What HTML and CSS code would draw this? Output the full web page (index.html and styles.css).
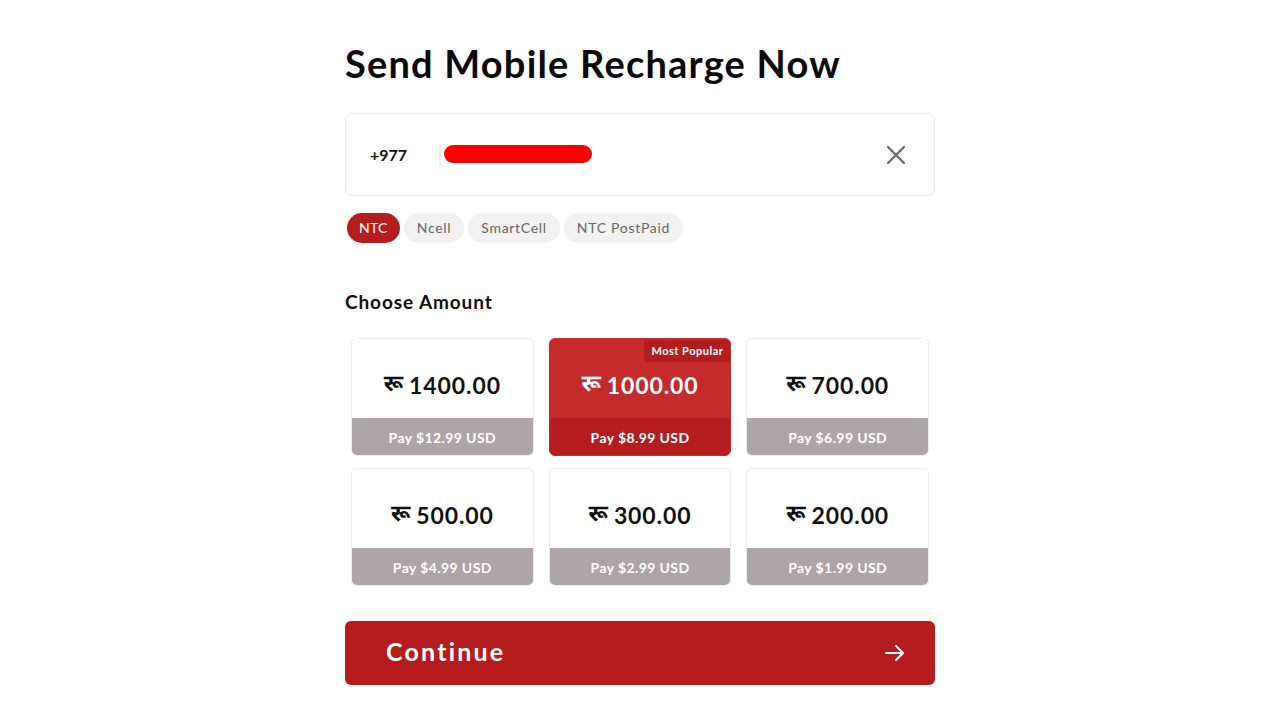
FILE: index.html
```html
<!DOCTYPE html>
<html lang="en">
<head>
<meta charset="utf-8">
<title>Send Mobile Recharge Now</title>
<link rel="stylesheet" href="styles.css">
</head>
<body>
<main class="page">
  <h1 class="title">Send Mobile Recharge Now</h1>

  <div class="phone-box">
    <span class="code">+977</span>
    <span class="divider"></span>
    <span class="redact"></span>
    <button class="clear" aria-label="Clear">
      <svg width="20" height="20" viewBox="0 0 20 20"><path d="M2 2 L18 18 M18 2 L2 18" stroke="#6b6b6b" stroke-width="2.4" stroke-linecap="round" fill="none"/></svg>
    </button>
  </div>

  <div class="chips">
    <span class="chip chip-active">NTC</span>
    <span class="chip">Ncell</span>
    <span class="chip">SmartCell</span>
    <span class="chip">NTC PostPaid</span>
  </div>

  <h2 class="section">Choose Amount</h2>

  <div class="grid">
    <div class="card">
      <div class="amount"><span class="rs">रू</span> 1400.00</div>
      <div class="pay">Pay $12.99 USD</div>
    </div>
    <div class="card card-active">
      <span class="badge">Most Popular</span>
      <div class="amount"><span class="rs">रू</span> 1000.00</div>
      <div class="pay">Pay $8.99 USD</div>
    </div>
    <div class="card">
      <div class="amount"><span class="rs">रू</span> 700.00</div>
      <div class="pay">Pay $6.99 USD</div>
    </div>
    <div class="card">
      <div class="amount"><span class="rs">रू</span> 500.00</div>
      <div class="pay">Pay $4.99 USD</div>
    </div>
    <div class="card">
      <div class="amount"><span class="rs">रू</span> 300.00</div>
      <div class="pay">Pay $2.99 USD</div>
    </div>
    <div class="card">
      <div class="amount"><span class="rs">रू</span> 200.00</div>
      <div class="pay">Pay $1.99 USD</div>
    </div>
  </div>

  <button class="continue">
    <span>Continue</span>
    <svg width="22" height="22" viewBox="0 0 22 22"><path d="M2 11 H19 M12 4 L19 11 L12 18" stroke="#fff" stroke-width="2" stroke-linecap="round" stroke-linejoin="round" fill="none"/></svg>
  </button>
</main>
</body>
</html>
```
FILE: styles.css
```css
* { box-sizing: border-box; }
html, body { margin: 0; padding: 0; background: #fff; }
body { font-family: "Lato", "Noto Sans", "DejaVu Sans", sans-serif; color: #111; }

.page {
  width: 590px;
  margin: 0 auto;
  padding-top: 40px;
  display: flex;
  flex-direction: column;
}

.title {
  margin: 0;
  font-size: 38px;
  line-height: 46px;
  font-weight: 700;
  color: #0a0a0a;
  letter-spacing: 1.2px;
}

.phone-box {
  margin-top: 27px;
  height: 83px;
  border: 1px solid #ececec;
  border-radius: 7px;
  display: flex;
  align-items: center;
  padding: 0 28px 0 24px;
}
.code { font-size: 16px; font-weight: 700; width: 69px; color: #111; }
.divider { width: 2px; height: 22px; background: #eee; margin-right: 3px; }
.redact {
  width: 148px; height: 18px; background: #ff0000; border-radius: 9px;
  margin-top: -2px;
}
.clear {
  margin-left: auto; border: 0; background: none; padding: 0;
  display: flex; align-items: center;
}

.chips { margin-top: 17px; display: flex; gap: 4px; padding-left: 2px; }
.chip {
  height: 30px; line-height: 30px; padding: 0 13px;
  border-radius: 15px; background: #f1f1f1; color: #666;
  font-size: 14px; letter-spacing: 0.7px;
}
.chip-active { background: #b51c1e; color: #fff; padding: 0 12px; letter-spacing: 0.3px; }

.section {
  margin: 47px 0 0;
  font-size: 19px; line-height: 24px; font-weight: 700; color: #111;
  letter-spacing: 0.9px;
}

.grid {
  margin-top: 24px;
  padding: 0 6px;
  display: grid;
  grid-template-columns: repeat(3, 1fr);
  column-gap: 15px;
  row-gap: 12px;
}
.card {
  position: relative;
  height: 118px;
  border: 1px solid #ececec;
  border-radius: 6px;
  overflow: hidden;
  display: flex;
  flex-direction: column;
  background: #fff;
}
.amount {
  flex: 1;
  display: flex; align-items: center; justify-content: center;
  font-size: 23px; font-weight: 700; color: #111; letter-spacing: 0.9px;
  padding-top: 12px;
}
.rs { font-family: "Noto Sans Devanagari", "Lohit Devanagari", "Mukta", sans-serif; font-weight: 700; margin-right: 6px; letter-spacing: 0; }
.pay {
  height: 37px; line-height: 39px; text-align: center;
  background: #ada5a7; color: #fff; font-size: 14px; font-weight: 700;
  letter-spacing: 0.4px;
}
.card-active { background: #c62b2b; border-color: #c62b2b; }
.card-active .amount { color: #fff; }
.card-active .pay { background: #b51c1e; }
.badge {
  position: absolute; top: 1px; right: 0;
  height: 22px; line-height: 22px; padding: 0 7px;
  background: #b51c1e; color: #fff; font-size: 11px; font-weight: 700;
  border-bottom-left-radius: 4px; letter-spacing: 0.5px;
}

.continue {
  margin-top: 35px;
  height: 64px;
  border: 0; border-radius: 6px;
  background: #b51c1e; color: #fff;
  display: flex; align-items: center; justify-content: space-between;
  padding: 0 29px 0 41px;
  font-family: inherit; font-size: 25px; font-weight: 700; letter-spacing: 2.2px;
  cursor: pointer;
}
.continue span { margin-top: -5px; }
```
